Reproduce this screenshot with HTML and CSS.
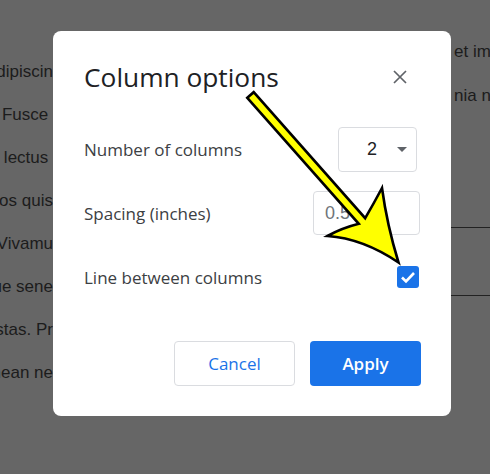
FILE: index.html
```html
<!DOCTYPE html>
<html lang="en">
<head>
    <meta charset="UTF-8">
    <meta name="viewport" content="width=device-width, initial-scale=1.0">
    <title>Column options</title>
    <link rel="stylesheet" href="styles.css">
</head>
<body>
    <div class="doc">
        <div class="doc-left">
            <div class="line"><span>consectetur adipiscin</span></div>
            <div class="line"><span>sit amet. Fusce&nbsp;</span></div>
            <div class="line"><span>tincidunt lectus&nbsp;</span></div>
            <div class="line"><span>Nam eros quis</span></div>
            <div class="line"><span>lacus. Vivamu</span></div>
            <div class="line"><span>tristique sene</span></div>
            <div class="line"><span>egestas. Pr</span></div>
            <div class="line"><span>Aenean ne</span></div>
        </div>
        <div class="doc-gap"></div>
        <div class="doc-right">
            <div class="line">et imperdiet</div>
            <div class="line">nia nunc</div>
            <div class="rule-box"></div>
        </div>
    </div>

    <div class="dialog">
        <div class="dialog-header">
            <h2 class="dialog-title">Column options</h2>
            <button class="close-btn" type="button" aria-label="Close">
                <svg width="14" height="14" viewBox="0 0 14 14">
                    <path d="M1 1 L13 13 M13 1 L1 13" stroke="#5f6368" stroke-width="1.7" fill="none"/>
                </svg>
            </button>
        </div>

        <div class="options">
            <div class="option">
                <span class="option-label">Number of columns</span>
                <div class="select">
                    <span class="select-value">2</span>
                    <span class="select-caret"></span>
                </div>
            </div>
            <div class="option">
                <span class="option-label">Spacing (inches)</span>
                <div class="spacing-input">0.5</div>
            </div>
            <div class="option">
                <span class="option-label">Line between columns</span>
                <span class="checkbox">
                    <svg width="22" height="22" viewBox="0 0 22 22">
                        <path d="M5 11.5 L9 15.5 L17 7" stroke="#fff" stroke-width="2.6" fill="none"/>
                    </svg>
                </span>
            </div>
        </div>

        <div class="actions">
            <button class="btn btn-cancel" type="button">Cancel</button>
            <button class="btn btn-apply" type="button">Apply</button>
        </div>
    </div>

    <svg class="arrow" width="490" height="474" viewBox="0 0 490 474">
        <path d="M247.3 97.8 L253.7 92.2 L365.2 218.2 Q374 203 382 188 Q387 225 398.5 262.5 Q363 238.5 327.5 236 Q342 228 358.8 223.8 Z"
              fill="#ffff00" stroke="#000" stroke-width="2.6" stroke-linejoin="miter" stroke-miterlimit="12"/>
    </svg>
</body>
</html>
```

FILE: styles.css
```css
:root {
    --overlay: #666666;
    --doc-text: #1c1c1c;
    --title: #202124;
    --label: #3c4043;
    --muted: #5f6368;
    --border: #dadce0;
    --primary: #1a73e8;
}
body {
    margin: 0;
    width: 490px;
    height: 474px;
    overflow: hidden;
    position: relative;
    background-color: var(--overlay);
    font-family: "Open Sans", Roboto, Arial, sans-serif;
}
.doc {
    display: grid;
    grid-template-columns: 53px 1fr 39px;
    height: 474px;
    font-family: "Liberation Sans", Arial, sans-serif;
    font-size: 17px;
    color: var(--doc-text);
}
.doc-left {
    padding-top: 50px;
}
.doc-left .line {
    display: flex;
    justify-content: flex-end;
    height: 43px;
    line-height: 43px;
    white-space: pre;
}
.doc-right {
    padding-top: 30px;
    padding-left: 3px;
    overflow: hidden;
    white-space: nowrap;
}
.doc-right .line {
    height: 44px;
    line-height: 44px;
}
.rule-box {
    margin-top: 109px;
    margin-left: -3px;
    height: 67px;
    border-top: 1px solid #222;
    border-bottom: 1px solid #222;
}
.dialog {
    position: absolute;
    left: 53px;
    top: 31px;
    width: 398px;
    height: 385px;
    box-sizing: border-box;
    padding: 24px 30px 30px 31px;
    background: #fff;
    border-radius: 8px;
    display: flex;
    flex-direction: column;
}
.dialog-header {
    display: flex;
    align-items: center;
    justify-content: space-between;
    height: 44px;
}
.dialog-title {
    margin: 0;
    font-size: 26.3px;
    font-weight: 400;
    color: var(--title);
}
.close-btn {
    width: 40px;
    height: 40px;
    margin-right: 1px;
    padding: 0;
    border: none;
    background: none;
    display: flex;
    align-items: center;
    justify-content: center;
}
.options {
    margin-top: 28px;
    display: flex;
    flex-direction: column;
    gap: 20px;
}
.option {
    display: flex;
    align-items: center;
    justify-content: space-between;
    height: 44px;
}
.option-label {
    font-size: 17px;
    color: var(--label);
}
.select {
    width: 79px;
    height: 45px;
    box-sizing: border-box;
    margin-right: 4px;
    padding-left: 28px;
    border: 1px solid var(--border);
    border-radius: 4px;
    display: flex;
    align-items: center;
    gap: 20px;
    font-family: "Liberation Sans", Arial, sans-serif;
    font-size: 18px;
    color: var(--title);
}
.select-caret {
    width: 0;
    height: 0;
    border-left: 5px solid transparent;
    border-right: 5px solid transparent;
    border-top: 5px solid var(--muted);
}
.spacing-input {
    width: 107px;
    height: 44px;
    box-sizing: border-box;
    margin-right: 1px;
    padding-left: 11px;
    border: 1px solid var(--border);
    border-radius: 4px;
    display: flex;
    align-items: center;
    font-family: "Liberation Sans", Arial, sans-serif;
    font-size: 18px;
    color: #70757a;
}
.checkbox {
    width: 22px;
    height: 22px;
    margin-right: 2px;
    border-radius: 3px;
    background: var(--primary);
    display: flex;
}
.actions {
    margin-top: auto;
    display: flex;
    justify-content: flex-end;
    gap: 15px;
}
.btn {
    height: 45px;
    box-sizing: border-box;
    border-radius: 4px;
    font-family: inherit;
    font-size: 17px;
    font-weight: 600;
    cursor: pointer;
}
.btn-cancel {
    width: 121px;
    border: 1px solid var(--border);
    background: #fff;
    color: var(--primary);
    font-weight: 500;
}
.btn-apply {
    width: 111px;
    border: none;
    background: var(--primary);
    color: #fff;
}
.arrow {
    position: absolute;
    left: 0;
    top: 0;
    pointer-events: none;
}
```
